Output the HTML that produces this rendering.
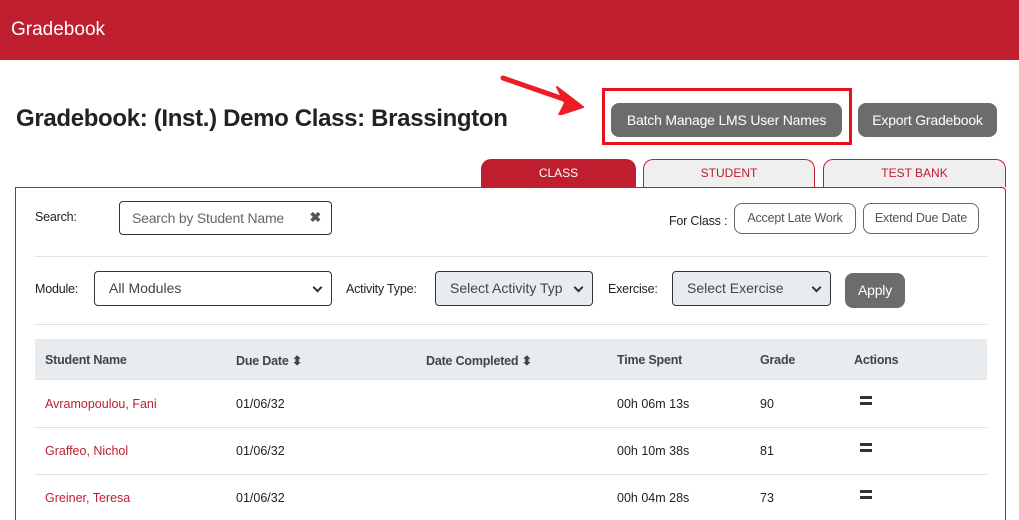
<!DOCTYPE html>
<html><head><meta charset="utf-8"><style>
*{box-sizing:border-box;margin:0;padding:0}
html,body{width:1019px;height:520px;overflow:hidden}
body{background:#fff;font-family:"Liberation Sans",Arial,sans-serif;position:relative;color:#222}
.a{position:absolute}
.hdr{left:0;top:0;width:1019px;height:60px;background:#be1e2d;color:#fff;font-size:19px;padding:19px 0 0 11px}
.btn{background:#6c6c6c;color:#fff;border-radius:8px;font-size:14px;text-align:center;line-height:34px;letter-spacing:-0.2px}
.tab{height:28px;border:1px solid #be1e2d;border-bottom:none;border-radius:10px 10px 0 0;background:#efefef;color:#be1e2d;font-size:12px;text-align:center;line-height:27px}
.ob{border:1px solid #666;border-radius:8px;color:#555;font-size:12.5px;text-align:center;line-height:29px;letter-spacing:-0.2px}
.lbl{font-size:12.5px;color:#222;letter-spacing:-0.2px}
.sel{border:1px solid #333;border-radius:4px;font-size:14px;color:#444;padding:0 14px;line-height:33px}
.sel::after{content:"";position:absolute;right:10px;top:12px;width:5px;height:5px;border-right:2px solid #333;border-bottom:2px solid #333;transform:rotate(45deg)}
.hr{height:1px;background:#dfe1e4;left:35px;width:952px}
.th{font-size:12.5px;font-weight:bold;color:#444;letter-spacing:-0.2px}
.td{font-size:12.5px;color:#222}
.nm{color:#be1e2d}
.eq{width:12px;height:9px;border-top:3px solid #333;border-bottom:3px solid #333}
</style></head><body>
<div class="a hdr">Gradebook</div>
<div class="a" style="left:16px;top:105px;font-size:24px;font-weight:bold;color:#222;letter-spacing:-0.33px">Gradebook: (Inst.) Demo Class: Brassington</div>
<svg class="a" style="left:495px;top:70px" width="95" height="45"><line x1="8" y1="8" x2="80" y2="33" stroke="#ee1c25" stroke-width="5" stroke-linecap="round"/><polygon points="62,17 88,37 64,45 70,33" fill="#ee1c25" stroke="#ee1c25" stroke-width="2" stroke-linejoin="round"/></svg>
<div class="a" style="left:602px;top:88px;width:250px;height:57px;border:3px solid #e8101c"></div>
<div class="a btn" style="left:611px;top:103px;width:231px;height:34px">Batch Manage LMS User Names</div>
<div class="a btn" style="left:858px;top:103px;width:139px;height:34px">Export Gradebook</div>
<div class="a tab" style="left:481px;top:159px;width:155px;background:#be1e2d;color:#fff">CLASS</div>
<div class="a tab" style="left:643px;top:159px;width:172px">STUDENT</div>
<div class="a tab" style="left:823px;top:159px;width:183px">TEST BANK</div>
<div class="a" style="left:15px;top:187px;width:991px;height:333px;border:1px solid #be1e2d;border-bottom:none;border-radius:0 4px 0 0"></div>
<div class="a lbl" style="left:35px;top:210px">Search:</div>
<div class="a" style="left:119px;top:201px;width:213px;height:34px;border:1px solid #333;border-radius:4px;font-size:14px;color:#666;padding:8px 0 0 12px;letter-spacing:-0.2px">Search by Student Name<span style="position:absolute;right:10px;top:7px;color:#555;font-weight:bold">✖</span></div>
<div class="a lbl" style="left:669px;top:214px">For Class :</div>
<div class="a ob" style="left:734px;top:203px;width:122px;height:31px">Accept Late Work</div>
<div class="a ob" style="left:863px;top:203px;width:116px;height:31px">Extend Due Date</div>
<div class="a hr" style="top:256px"></div>
<div class="a lbl" style="left:35px;top:282px">Module:</div>
<div class="a sel" style="left:94px;top:271px;width:238px;height:35px">All Modules</div>
<div class="a lbl" style="left:346px;top:282px">Activity Type:</div>
<div class="a sel" style="left:435px;top:271px;width:158px;height:35px;background:#e9ecef;overflow:hidden;white-space:nowrap">Select Activity Typ</div>
<div class="a lbl" style="left:608px;top:282px">Exercise:</div>
<div class="a sel" style="left:672px;top:271px;width:159px;height:35px;background:#e9ecef">Select Exercise</div>
<div class="a btn" style="left:845px;top:273px;width:60px;height:35px;line-height:35px">Apply</div>
<div class="a hr" style="top:324px"></div>
<div class="a" style="left:35px;top:339px;width:952px;height:41px;background:#e9ecef;border-bottom:1px solid #dee2e6"></div>
<div class="a th" style="left:45px;top:353px">Student Name</div>
<div class="a th" style="left:236px;top:353px">Due Date ⬍</div>
<div class="a th" style="left:426px;top:353px">Date Completed ⬍</div>
<div class="a th" style="left:617px;top:353px">Time Spent</div>
<div class="a th" style="left:760px;top:353px">Grade</div>
<div class="a th" style="left:854px;top:353px">Actions</div>
<div class="a hr" style="top:427px;background:#dee2e6"></div>
<div class="a hr" style="top:474px;background:#dee2e6"></div>
<div class="a td nm" style="left:45px;top:397px">Avramopoulou, Fani</div>
<div class="a td" style="left:236px;top:397px">01/06/32</div>
<div class="a td" style="left:617px;top:397px">00h 06m 13s</div>
<div class="a td" style="left:760px;top:397px">90</div>
<div class="a eq" style="left:860px;top:396px"></div>
<div class="a td nm" style="left:45px;top:444px">Graffeo, Nichol</div>
<div class="a td" style="left:236px;top:444px">01/06/32</div>
<div class="a td" style="left:617px;top:444px">00h 10m 38s</div>
<div class="a td" style="left:760px;top:444px">81</div>
<div class="a eq" style="left:860px;top:443px"></div>
<div class="a td nm" style="left:45px;top:491px">Greiner, Teresa</div>
<div class="a td" style="left:236px;top:491px">01/06/32</div>
<div class="a td" style="left:617px;top:491px">00h 04m 28s</div>
<div class="a td" style="left:760px;top:491px">73</div>
<div class="a eq" style="left:860px;top:490px"></div>
</body></html>
